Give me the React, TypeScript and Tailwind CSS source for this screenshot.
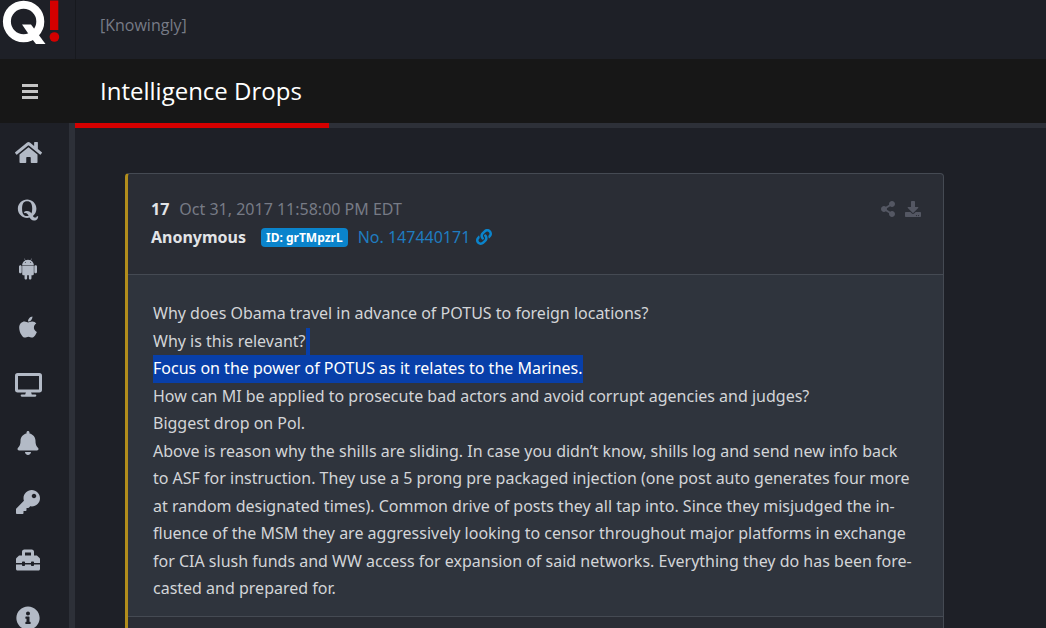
import type { ReactNode } from 'react';
import {
  FaApple, FaBell, FaDownload, FaHome, FaInfoCircle,
  FaKey, FaLink, FaQuora, FaShareAlt, FaToolbox,
} from 'react-icons/fa';

interface NavItem {
  label: string;
  icon: ReactNode;
}

const NAV: NavItem[] = [
  { label: 'Home', icon: <FaHome size={27} /> },
  { label: 'Drops', icon: <FaQuora /> },
  { label: 'Android', icon: <AndroidIcon /> },
  { label: 'Apple', icon: <FaApple /> },
  { label: 'Desktop', icon: <DesktopIcon /> },
  { label: 'Alerts', icon: <FaBell /> },
  { label: 'Keys', icon: <FaKey /> },
  { label: 'Tools', icon: <FaToolbox /> },
  { label: 'About', icon: <FaInfoCircle /> },
];

function AndroidIcon() {
  return (
    <svg viewBox="0 0 448 512" fill="currentColor" width="1em" height="1em" aria-hidden>
      <path d="M89.6 204.5v115.8c0 15.4-12.1 27.7-27.5 27.7-15.3 0-30.1-12.4-30.1-27.7V204.5c0-15.1 14.8-27.5 30.1-27.5 15.1 0 27.5 12.4 27.5 27.5zm10.8 157c0 16.4 13.2 29.6 29.6 29.6h19.9l.3 61.1c0 36.9 55.2 36.6 55.2 0v-61.1h37.2v61.1c0 36.7 55.5 36.8 55.5 0v-61.1h20.2c16.2 0 29.4-13.2 29.4-29.6V182.1H100.4v179.4zm248-189.1H99.3c0-42.8 25.6-80 63.6-99.4l-19.1-35.3c-2.8-4.9 4.3-8 6.7-3.8l19.4 35.6c34.9-15.5 75-14.7 108.3 0L297.5 34c2.5-4.3 9.5-1.1 6.7 3.8L285.1 73c37.7 19.4 63.3 56.6 63.3 99.4zm-170.7-55.5c0-5.7-4.6-10.5-10.5-10.5-5.7 0-10.2 4.8-10.2 10.5s4.6 10.5 10.2 10.5c5.9 0 10.5-4.8 10.5-10.5zm113.4 0c0-5.7-4.6-10.5-10.2-10.5-5.9 0-10.5 4.8-10.5 10.5s4.6 10.5 10.5 10.5c5.6 0 10.2-4.8 10.2-10.5zm94.8 60.1c-15.1 0-27.5 12.1-27.5 27.5v115.8c0 15.4 12.4 27.7 27.5 27.7 15.4 0 30.1-12.4 30.1-27.7V204.5c0-15.4-14.8-27.5-30.1-27.5z" />
    </svg>
  );
}

function DesktopIcon() {
  return (
    <svg viewBox="0 0 27 24" width="27" height="24" aria-hidden>
      <rect x="1.5" y="1.5" width="24" height="16.5" rx="1.2" fill="none" stroke="currentColor" strokeWidth="3" />
      <path d="M11 19h5l.8 2.4h3.4a1.1 1.1 0 0 1 0 2.3H6.8a1.1 1.1 0 0 1 0-2.3h3.4z" fill="currentColor" />
    </svg>
  );
}

// Ring with a slanted tail, then the red exclamation bar and dot
function Logo() {
  return (
    <svg viewBox="0 0 60 46" width="60" height="46" aria-hidden>
      <circle cx="23.6" cy="21.5" r="16.7" fill="none" stroke="#fff" strokeWidth="8" />
      <path d="M22 24.5h9L45.5 44h-9.5l-4-5z" fill="#fff" />
      <path d="M50 .5h8.3V30H50z" fill="#d40000" />
      <circle cx="54.4" cy="37" r="4.8" fill="#d40000" />
    </svg>
  );
}

function MenuIcon() {
  return (
    <svg viewBox="0 0 16 15" width="16" height="15" fill="currentColor" aria-hidden>
      <rect y="0" width="16" height="3" />
      <rect y="6" width="16" height="3" />
      <rect y="12" width="16" height="3" />
    </svg>
  );
}

function Sidebar() {
  return (
    <nav className="w-[75px] shrink-0 border-r-[6px] border-[#2d3038]">
      {NAV.map(item => (
        <a
          key={item.label}
          href="#"
          aria-label={item.label}
          className="flex h-[calc(1lh+1rem)] items-center justify-center pr-[13px] text-[26px] leading-relaxed text-[#b3bac6]"
        >
          <span className="text-[24px]">{item.icon}</span>
        </a>
      ))}
    </nav>
  );
}

function DropCard() {
  return (
    <article className="rounded border border-l-[3px] border-[#454a53] border-l-[#b28d1c] bg-[#2a2d35] font-['Noto_Sans','Open_Sans',sans-serif]">
      <header className="flex items-start justify-between border-b border-[#454a53] pt-[21px] pr-[22px] pb-[23px] pl-[23px]">
        <div className="leading-7">
          <div className="flex gap-2.5">
            <b className="text-[#e2e4e7]">17</b>
            <time className="text-[#777b86]">Oct 31, 2017 11:58:00 PM EDT</time>
          </div>
          <div className="flex items-center">
            <b className="text-[#e2e4e7]">Anonymous</b>
            <span className="mr-2.5 ml-[15px] rounded bg-[#0a84cc] px-[5px] text-xs leading-[19px] font-bold text-white">
              ID: grTMpzrL
            </span>
            <a href="#" className="flex items-center gap-1.5 text-[#1f7cc0]">
              No. 147440171
              <FaLink className="text-[#0a84cc]" />
            </a>
          </div>
        </div>
        <div className="flex gap-[9px] pt-1.5 text-[#545763]">
          <button type="button" aria-label="Share"><FaShareAlt /></button>
          <button type="button" aria-label="Download"><FaDownload /></button>
        </div>
      </header>

      <div className="border-b border-[#454a53] bg-[#2f343d] pt-[25px] pr-[30px] pb-[13px] pl-[25px] text-base leading-[1.72] text-[#d3d5d8]">
        <p>Why does Obama travel in advance of POTUS to foreign locations?</p>
        <p>
          Why is this relevant?
          <span className="inline-block bg-[#083fa9]">&nbsp;</span>
        </p>
        <p className="w-fit bg-[#083fa9] text-white">
          Focus on the power of POTUS as it relates to the Marines.
        </p>
        <p>How can MI be applied to prosecute bad actors and avoid corrupt agencies and judges?</p>
        <p>Biggest drop on Pol.</p>
        <p>
          Above is reason why the shills are sliding. In case you didn’t know, shills log and send
          new info back to ASF for instruction. They use a 5 prong pre packaged injection (one post
          auto generates four more at random designated times). Common drive of posts they all tap
          into. Since they misjudged the in&shy;fluence of the MSM they are aggressively looking to
          censor throughout major platforms in exchange for CIA slush funds and WW access for
          expansion of said networks. Everything they do has been fore&shy;casted and prepared for.
        </p>
      </div>

      <footer className="h-12" />
    </article>
  );
}

export default function App() {
  return (
    <div className="flex h-screen flex-col overflow-hidden bg-[#1e2027] font-['Open_Sans',sans-serif] text-base">
      <div className="flex h-[59px] shrink-0">
        <a href="#" aria-label="Q!" className="w-[76px] border-r border-[#17191e]">
          <Logo />
        </a>
        <p className="pt-[13px] pl-6 text-[#777b86]">[Knowingly]</p>
      </div>

      <div className="flex h-16 shrink-0 items-center bg-[#171717]">
        <button type="button" aria-label="Menu" className="flex w-[75px] justify-center pr-4 text-[#c4c4c4]">
          <MenuIcon />
        </button>
        <h1 className="pl-[25px] text-2xl text-white">Intelligence Drops</h1>
      </div>

      <div className="flex min-h-0 grow">
        <Sidebar />
        <main className="min-w-0 grow">
          <div className="h-[5px] bg-[#2d3038]">
            <div className="h-full w-[254px] bg-[#d40000]" />
          </div>
          <div className="pt-[45px] pr-[102px] pl-[50px]">
            <DropCard />
          </div>
        </main>
      </div>
    </div>
  );
}
